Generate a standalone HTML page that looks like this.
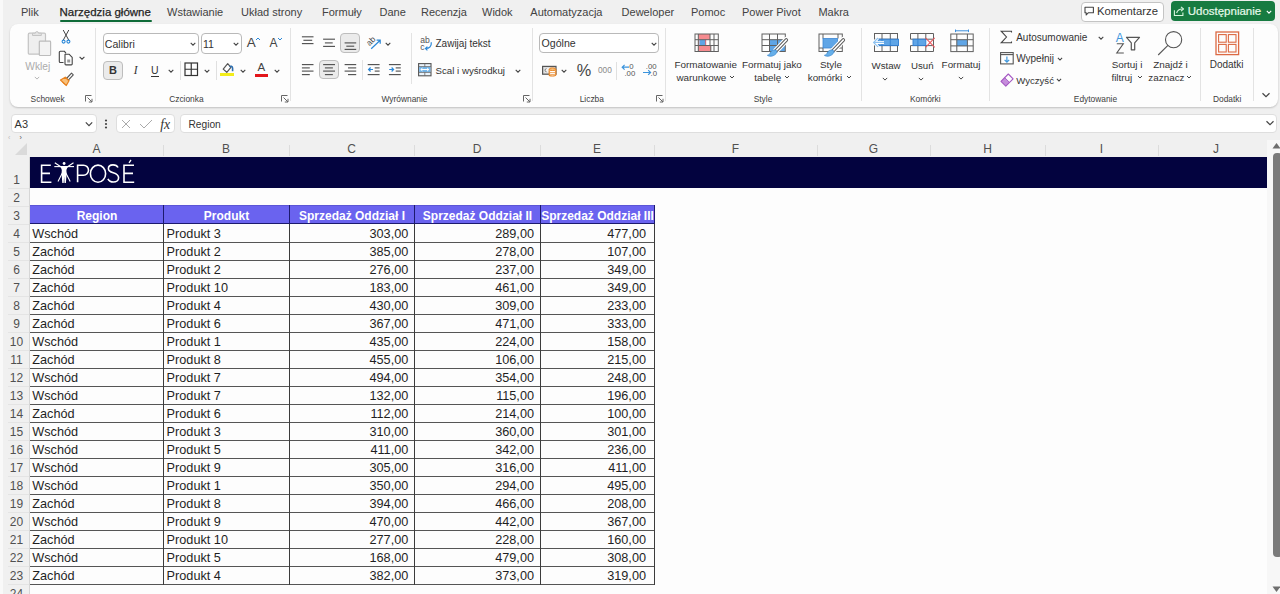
<!DOCTYPE html><html><head><meta charset="utf-8"><style>
html,body{margin:0;padding:0;}
body{width:1280px;height:594px;overflow:hidden;position:relative;background:#f0f0f0;font-family:"Liberation Sans", sans-serif;}
.t{position:absolute;white-space:nowrap;line-height:1;}
svg{overflow:visible}
</style></head><body>
<div style="position:absolute;left:0px;top:0px;width:3px;height:594px;background:#f9f9f9"></div>
<div class="t" style="left:21px;top:6.70px;font-size:11px;color:#424242;">Plik</div>
<div class="t" style="left:59.5px;top:7.46px;font-size:11.5px;color:#242424;-webkit-text-stroke:0.25px #242424;">Narzędzia główne</div>
<div class="t" style="left:167px;top:6.70px;font-size:11px;color:#424242;">Wstawianie</div>
<div class="t" style="left:241px;top:6.70px;font-size:11px;color:#424242;">Układ strony</div>
<div class="t" style="left:322px;top:6.70px;font-size:11px;color:#424242;">Formuły</div>
<div class="t" style="left:379.5px;top:6.70px;font-size:11px;color:#424242;">Dane</div>
<div class="t" style="left:421px;top:6.70px;font-size:11px;color:#424242;">Recenzja</div>
<div class="t" style="left:482px;top:6.70px;font-size:11px;color:#424242;">Widok</div>
<div class="t" style="left:530.3px;top:6.70px;font-size:11px;color:#424242;">Automatyzacja</div>
<div class="t" style="left:621.6px;top:6.70px;font-size:11px;color:#424242;">Deweloper</div>
<div class="t" style="left:691px;top:6.70px;font-size:11px;color:#424242;">Pomoc</div>
<div class="t" style="left:742px;top:6.70px;font-size:11px;color:#424242;">Power Pivot</div>
<div class="t" style="left:818.4px;top:6.70px;font-size:11px;color:#424242;">Makra</div>
<div style="position:absolute;left:59.5px;top:20px;width:92.5px;height:2.2px;background:#0f6b38;border-radius:1px"></div>
<div style="position:absolute;left:1080.5px;top:1.5px;width:83px;height:20px;background:#fff;border:1px solid #c4c4c4;border-radius:4px;box-sizing:border-box"></div>
<svg style="position:absolute;left:1084px;top:6px;" width="12" height="12" viewBox="0 0 12 12"><path d="M1 1.2h8.4v5.6H4.2L2.2 9V6.8H1z" fill="none" stroke="#444" stroke-width="1.1" stroke-linejoin="round"/></svg>
<div class="t" style="left:1097px;top:6.35px;font-size:11.3px;color:#333333;">Komentarze</div>
<div style="position:absolute;left:1171px;top:1px;width:104px;height:20px;background:#177b41;border-radius:4px"></div>
<svg style="position:absolute;left:1170px;top:2px;" width="20" height="20" viewBox="0 0 20 20"><path d="M4.4 8.2V13.5H12.9V10.4" fill="none" stroke="#d8f5de" stroke-width="1.1"/><path d="M6.6 11c0.8-2.6 2.8-4 5.8-4" fill="none" stroke="#d8f5de" stroke-width="1.1"/><path d="M11 4.9l2.5 2.1-2.5 2.2" fill="none" stroke="#d8f5de" stroke-width="1.1" stroke-linejoin="round"/></svg>
<div class="t" style="left:1187.7px;top:6.26px;font-size:11.5px;color:#e6f9ea;-webkit-text-stroke:0.2px #e6f9ea;">Udostępnianie</div>
<svg style="position:absolute;left:1264px;top:8px;" width="10" height="8" viewBox="0 0 10 8"><path d="M2.8 2.9 L5 5.1 L7.2 2.9" fill="none" stroke="#fff" stroke-width="1.1"/></svg>
<div style="position:absolute;left:10px;top:24px;width:1268px;height:83px;background:#fdfdfd;border-radius:8px;box-shadow:0 1px 2px rgba(0,0,0,0.2)"></div>
<div style="position:absolute;left:95px;top:28px;width:1px;height:73px;background:#e3e3e3"></div>
<div style="position:absolute;left:290px;top:28px;width:1px;height:73px;background:#e3e3e3"></div>
<div style="position:absolute;left:532px;top:28px;width:1px;height:73px;background:#e3e3e3"></div>
<div style="position:absolute;left:665px;top:28px;width:1px;height:73px;background:#e3e3e3"></div>
<div style="position:absolute;left:861px;top:28px;width:1px;height:73px;background:#e3e3e3"></div>
<div style="position:absolute;left:989px;top:28px;width:1px;height:73px;background:#e3e3e3"></div>
<div style="position:absolute;left:1200px;top:28px;width:1px;height:73px;background:#e3e3e3"></div>
<div style="position:absolute;left:1252.5px;top:28px;width:1px;height:73px;background:#e3e3e3"></div>
<svg style="position:absolute;left:27px;top:30px;" width="26" height="28" viewBox="0 0 26 28"><rect x="1.3" y="3.2" width="17.2" height="21" rx="1.2" fill="#efefef" stroke="#c4c4c4" stroke-width="1.2"/><path d="M5.5 5.5v-2.3h2.8a1.6 1.6 0 0 1 3.2 0h2.8v2.3z" fill="#e4e4e4" stroke="#c4c4c4" stroke-width="1"/><rect x="12.3" y="11.2" width="11.3" height="14.3" rx="0.8" fill="#f3f3f3" stroke="#bcbcbc" stroke-width="1.2"/></svg>
<div class="t" style="left:25.3px;top:61.58px;font-size:10.2px;color:#ababab;">Wklej</div>
<svg style="position:absolute;left:31.799999999999997px;top:74.3px;" width="10" height="8" viewBox="0 0 10 8"><path d="M2.8 2.9 L5 5.1 L7.2 2.9" fill="none" stroke="#b5b5b5" stroke-width="1"/></svg>
<svg style="position:absolute;left:60px;top:29px;" width="12" height="16" viewBox="0 0 12 16"><path d="M3.2 1l5.5 10M8.8 1l-5.5 10" stroke="#444" stroke-width="1"/><circle cx="3.6" cy="12.6" r="1.5" fill="#fff" stroke="#2b88d8" stroke-width="1.1"/><circle cx="8.4" cy="12.6" r="1.5" fill="#fff" stroke="#2b88d8" stroke-width="1.1"/></svg>
<svg style="position:absolute;left:58px;top:50px;" width="16" height="16" viewBox="0 0 16 16"><path d="M5 1.3H2.3a1 1 0 0 0-1 1v9.2a1 1 0 0 0 1 1H5.5" fill="none" stroke="#444" stroke-width="1.1"/><path d="M5 1.3h1.5l1.5 2" fill="none" stroke="#444" stroke-width="1.1"/><path d="M7 4.2h4l3.2 3.2v6.6a0.9 0.9 0 0 1-0.9 0.9H7.9a0.9 0.9 0 0 1-0.9-0.9z" fill="#fff" stroke="#444" stroke-width="1.1" stroke-linejoin="round"/><rect x="9.2" y="9.5" width="3" height="3" fill="#999"/></svg>
<svg style="position:absolute;left:76.6px;top:54.1px;" width="10" height="8" viewBox="0 0 10 8"><path d="M2.6 2.8 L5 5.2 L7.4 2.8" fill="none" stroke="#444" stroke-width="1.1"/></svg>
<svg style="position:absolute;left:59px;top:71px;" width="16" height="16" viewBox="0 0 16 16"><path d="M7.5 7.5l5-5.3 1.8 1.6-5 5.4" fill="none" stroke="#555" stroke-width="1.1" stroke-linejoin="round"/><path d="M6.2 6.2l3.8 3.6" stroke="#555" stroke-width="1.1"/><path d="M1.5 9l4.7-2.8 3.8 3.6-2.7 4.7z" fill="#f8c07a" stroke="#e8821e" stroke-width="1.2" stroke-linejoin="round"/><path d="M3.5 11.5l3 2" stroke="#e8821e" stroke-width="1"/></svg>
<div class="t" style="left:-52.4px;width:200px;text-align:center;top:94.55px;font-size:8.4px;color:#404040;">Schowek</div>
<svg style="position:absolute;left:85px;top:95px;" width="8" height="8" viewBox="0 0 8 8"><path d="M0.5 6.5V0.5H6.5" fill="none" stroke="#666" stroke-width="1"/><path d="M2.5 2.5L7 7M3.8 7H7V3.8" fill="none" stroke="#666" stroke-width="1"/></svg>
<div style="position:absolute;left:103px;top:33px;width:95.5px;height:20.5px;background:#fff;border:1px solid #b9b9b9;border-radius:4px;box-sizing:border-box"></div>
<div class="t" style="left:104.8px;top:38.59px;font-size:10.6px;color:#333;">Calibri</div>
<svg style="position:absolute;left:188px;top:39.5px;" width="10" height="8" viewBox="0 0 10 8"><path d="M2.7 2.85 L5 5.15 L7.3 2.85" fill="none" stroke="#444" stroke-width="1.1"/></svg>
<div style="position:absolute;left:200.5px;top:33px;width:41px;height:20.5px;background:#fff;border:1px solid #b9b9b9;border-radius:4px;box-sizing:border-box"></div>
<div class="t" style="left:203px;top:38.59px;font-size:10.6px;color:#333;">11</div>
<svg style="position:absolute;left:231px;top:39.5px;" width="10" height="8" viewBox="0 0 10 8"><path d="M2.7 2.85 L5 5.15 L7.3 2.85" fill="none" stroke="#444" stroke-width="1.1"/></svg>
<div class="t" style="left:246.8px;top:35.79px;font-size:13.5px;color:#444;">A</div>
<svg style="position:absolute;left:255px;top:36.5px;" width="6" height="4" viewBox="0 0 6 4"><path d="M1 3l2-2 2 2" fill="none" stroke="#2b88d8" stroke-width="1"/></svg>
<div class="t" style="left:269.5px;top:37.32px;font-size:12px;color:#444;">A</div>
<svg style="position:absolute;left:277px;top:37px;" width="6" height="4" viewBox="0 0 6 4"><path d="M1 1l2 2 2-2" fill="none" stroke="#2b88d8" stroke-width="1"/></svg>
<div style="position:absolute;left:103px;top:60.5px;width:20px;height:19.5px;background:#ebebeb;border:1px solid #bdbdbd;border-radius:4px;box-sizing:border-box"></div>
<div class="t" style="left:13px;width:200px;text-align:center;top:65.20px;font-size:11px;color:#333;font-weight:bold;">B</div>
<div class="t" style="left:133.7px;top:64.96px;font-size:11.5px;color:#333;font-style:italic;font-family:'Liberation Serif',serif;">I</div>
<div class="t" style="left:151px;top:64.94px;font-size:10.5px;color:#333;">U</div>
<div style="position:absolute;left:151px;top:76.3px;width:8px;height:1px;background:#333"></div>
<svg style="position:absolute;left:166px;top:66.5px;" width="10" height="8" viewBox="0 0 10 8"><path d="M2.7 2.85 L5 5.15 L7.3 2.85" fill="none" stroke="#444" stroke-width="1.1"/></svg>
<div style="position:absolute;left:179.5px;top:61px;width:1px;height:19px;background:#e0e0e0"></div>
<svg style="position:absolute;left:184px;top:62px;" width="15" height="15" viewBox="0 0 15 15"><rect x="1" y="1" width="12.5" height="12.5" fill="none" stroke="#333" stroke-width="1.2"/><path d="M7.25 1v12.5M1 7.25h12.5" stroke="#333" stroke-width="1.2"/></svg>
<svg style="position:absolute;left:202px;top:66.5px;" width="10" height="8" viewBox="0 0 10 8"><path d="M2.7 2.85 L5 5.15 L7.3 2.85" fill="none" stroke="#444" stroke-width="1.1"/></svg>
<div style="position:absolute;left:215.8px;top:61px;width:1px;height:19px;background:#e0e0e0"></div>
<svg style="position:absolute;left:218px;top:60px;" width="18" height="16" viewBox="0 0 18 16"><path d="M9.7 3.6L5.2 9.1 8.8 12.3 12.9 7.4z" fill="#fff" stroke="#555" stroke-width="1.2" stroke-linejoin="round"/><path d="M11.6 6.9c1-1 3-0.8 3 1.3v3" fill="none" stroke="#2e6fb0" stroke-width="1.6"/></svg>
<div style="position:absolute;left:220.4px;top:73.4px;width:14px;height:3.1px;background:#f3ed1a"></div>
<svg style="position:absolute;left:238px;top:66.5px;" width="10" height="8" viewBox="0 0 10 8"><path d="M2.7 2.85 L5 5.15 L7.3 2.85" fill="none" stroke="#444" stroke-width="1.1"/></svg>
<div class="t" style="left:257.6px;top:62.26px;font-size:11.5px;color:#444;">A</div>
<div style="position:absolute;left:254.8px;top:73.5px;width:13.4px;height:3.2px;background:#e3161b"></div>
<svg style="position:absolute;left:272px;top:66.5px;" width="10" height="8" viewBox="0 0 10 8"><path d="M2.7 2.85 L5 5.15 L7.3 2.85" fill="none" stroke="#444" stroke-width="1.1"/></svg>
<div class="t" style="left:86.4px;width:200px;text-align:center;top:94.55px;font-size:8.4px;color:#404040;">Czcionka</div>
<svg style="position:absolute;left:281px;top:95px;" width="8" height="8" viewBox="0 0 8 8"><path d="M0.5 6.5V0.5H6.5" fill="none" stroke="#666" stroke-width="1"/><path d="M2.5 2.5L7 7M3.8 7H7V3.8" fill="none" stroke="#666" stroke-width="1"/></svg>
<div style="position:absolute;left:340.2px;top:33px;width:19.8px;height:20.4px;background:#ebebeb;border:1px solid #bdbdbd;border-radius:4px;box-sizing:border-box"></div>
<div style="position:absolute;left:319.2px;top:60.2px;width:19.7px;height:19.2px;background:#ebebeb;border:1px solid #bdbdbd;border-radius:4px;box-sizing:border-box"></div>
<svg style="position:absolute;left:296px;top:30px;" width="110" height="52" viewBox="0 0 110 52"><path d="M5.9 6.8H17.5" stroke="#555" stroke-width="1.15"/><path d="M7.4 10.3H16.2" stroke="#555" stroke-width="1.15"/><path d="M5.9 13.6H17.5" stroke="#555" stroke-width="1.15"/><path d="M27.1 9.2H39" stroke="#555" stroke-width="1.15"/><path d="M28.9 12.9H36.7" stroke="#555" stroke-width="1.15"/><path d="M27.1 16.4H39" stroke="#555" stroke-width="1.15"/><path d="M48.6 12.9H60.2" stroke="#555" stroke-width="1.15"/><path d="M50.3 16.2H58.2" stroke="#555" stroke-width="1.15"/><path d="M48.6 19.4H60.2" stroke="#555" stroke-width="1.15"/><path d="M5.9 34.6H17.5" stroke="#555" stroke-width="1.15"/><path d="M5.9 37.9H13.8" stroke="#555" stroke-width="1.15"/><path d="M5.9 41.1H17.5" stroke="#555" stroke-width="1.15"/><path d="M5.9 44.6H13.8" stroke="#555" stroke-width="1.15"/><path d="M27.1 34.6H39" stroke="#555" stroke-width="1.15"/><path d="M28.9 37.9H36.9" stroke="#555" stroke-width="1.15"/><path d="M27.1 41.1H39" stroke="#555" stroke-width="1.15"/><path d="M28.9 44.6H36.9" stroke="#555" stroke-width="1.15"/><path d="M48.6 34.6H60.2" stroke="#555" stroke-width="1.15"/><path d="M52 37.9H60.2" stroke="#555" stroke-width="1.15"/><path d="M48.6 41.1H60.2" stroke="#555" stroke-width="1.15"/><path d="M52 44.6H60.2" stroke="#555" stroke-width="1.15"/><path d="M71.7 34.6H83.6" stroke="#555" stroke-width="1.15"/><path d="M78.7 37.9H83.6" stroke="#555" stroke-width="1.15"/><path d="M78.7 41.1H83.6" stroke="#555" stroke-width="1.15"/><path d="M71.7 44.6H83.6" stroke="#555" stroke-width="1.15"/><path d="M92.9 34.6H104.8" stroke="#555" stroke-width="1.15"/><path d="M99.7 37.9H104.8" stroke="#555" stroke-width="1.15"/><path d="M99.7 41.1H104.8" stroke="#555" stroke-width="1.15"/><path d="M92.9 44.6H104.8" stroke="#555" stroke-width="1.15"/><path d="M77 39.5H72.5M74.6 37.5l-2 2 2 2" fill="none" stroke="#2b88d8" stroke-width="1.2"/><path d="M93.2 39.5H97.7M95.6 37.5l2 2-2 2" fill="none" stroke="#2b88d8" stroke-width="1.2"/><text x="0" y="0" font-size="8.2" font-family="Liberation Sans" fill="#444" transform="translate(73.5 16.3) rotate(-45)">ab</text><path d="M75.2 18.8L84.2 10.2M80.6 10.2h3.6v3.6" fill="none" stroke="#2b88d8" stroke-width="1.2"/><path d="M66.5 30v20" stroke="#e3e3e3" stroke-width="1"/></svg>
<svg style="position:absolute;left:382.9px;top:39.6px;" width="10" height="8" viewBox="0 0 10 8"><path d="M2.7 2.85 L5 5.15 L7.3 2.85" fill="none" stroke="#444" stroke-width="1.1"/></svg>
<div style="position:absolute;left:410.5px;top:33px;width:1px;height:51px;background:#e3e3e3"></div>
<svg style="position:absolute;left:414px;top:32px;" width="20" height="20" viewBox="0 0 20 20"><text x="6.2" y="11.2" font-size="8.6" font-family="Liberation Sans" fill="#555">ab</text><text x="6.2" y="17.6" font-size="8.6" font-family="Liberation Sans" fill="#555">c</text><path d="M17.3 10.2c0.3 4-1.8 6.3-5.6 6.3M13.4 14.6l-1.9 1.9 1.9 1.9" fill="none" stroke="#2b88d8" stroke-width="1.2"/></svg>
<div class="t" style="left:435.5px;top:39.18px;font-size:10px;color:#333;">Zawijaj tekst</div>
<svg style="position:absolute;left:418px;top:63px;" width="14" height="14" viewBox="0 0 14 14"><rect x="0.6" y="0.6" width="12.4" height="12.2" fill="#eaf4fc" stroke="#555" stroke-width="1.1"/><rect x="1.2" y="3.8" width="11.2" height="5.4" fill="#74b6ea"/><path d="M0.6 3.6h12.4M0.6 9.4h12.4M6.8 0.6v3M6.8 9.4v3.4" stroke="#666" stroke-width="0.8"/><path d="M2.8 6.5h8M4.5 5l-1.7 1.5 1.7 1.5M9.1 5l1.7 1.5-1.7 1.5" fill="none" stroke="#fff" stroke-width="1"/></svg>
<div class="t" style="left:435.5px;top:65.82px;font-size:9.7px;color:#333;">Scal i wyśrodkuj</div>
<svg style="position:absolute;left:512.5px;top:66.5px;" width="10" height="8" viewBox="0 0 10 8"><path d="M2.7 2.85 L5 5.15 L7.3 2.85" fill="none" stroke="#444" stroke-width="1.1"/></svg>
<div class="t" style="left:304.5px;width:200px;text-align:center;top:94.55px;font-size:8.4px;color:#404040;">Wyrównanie</div>
<svg style="position:absolute;left:522.5px;top:95px;" width="8" height="8" viewBox="0 0 8 8"><path d="M0.5 6.5V0.5H6.5" fill="none" stroke="#666" stroke-width="1"/><path d="M2.5 2.5L7 7M3.8 7H7V3.8" fill="none" stroke="#666" stroke-width="1"/></svg>
<div style="position:absolute;left:539.3px;top:33.3px;width:120.2px;height:20px;background:#fff;border:1px solid #b9b9b9;border-radius:4px;box-sizing:border-box"></div>
<div class="t" style="left:541.5px;top:38.49px;font-size:10.6px;color:#333;">Ogólne</div>
<svg style="position:absolute;left:649px;top:39.5px;" width="10" height="8" viewBox="0 0 10 8"><path d="M2.7 2.85 L5 5.15 L7.3 2.85" fill="none" stroke="#444" stroke-width="1.1"/></svg>
<svg style="position:absolute;left:542px;top:65px;" width="16" height="13" viewBox="0 0 16 13"><rect x="0.6" y="1.4" width="13.4" height="7.8" fill="#dcdcdc" stroke="#555" stroke-width="1.2"/><rect x="2.6" y="3.2" width="9.4" height="4.2" fill="#f4f4f4"/><path d="M4.6 3.6a1.6 1.6 0 1 0 0 3.2" fill="none" stroke="#666" stroke-width="0.8"/><path d="M7.2 4.2v5.8c0 1.3 6.6 1.3 6.6 0v-5.8" fill="#fff" stroke="#e8821e" stroke-width="1.1"/><ellipse cx="10.5" cy="4.2" rx="3.3" ry="1.3" fill="#f8c07a" stroke="#e8821e" stroke-width="1"/><path d="M7.2 6.7c0 1.2 6.6 1.2 6.6 0M7.2 8.6c0 1.2 6.6 1.2 6.6 0" fill="none" stroke="#e8821e" stroke-width="0.8"/></svg>
<svg style="position:absolute;left:559.3px;top:66.5px;" width="10" height="8" viewBox="0 0 10 8"><path d="M2.7 2.85 L5 5.15 L7.3 2.85" fill="none" stroke="#444" stroke-width="1.1"/></svg>
<div class="t" style="left:576.8px;top:62.04px;font-size:16.3px;color:#444;">%</div>
<div class="t" style="left:598px;top:66.00px;font-size:8.3px;color:#8a8a8a;">000</div>
<div style="position:absolute;left:616.3px;top:62px;width:1px;height:18px;background:#e0e0e0"></div>
<svg style="position:absolute;left:621px;top:62px;" width="16" height="16" viewBox="0 0 16 16"><text x="8.2" y="7.2" font-size="7.8" font-family="Liberation Sans" fill="#555">0</text><text x="3.4" y="14" font-size="7.8" font-family="Liberation Sans" fill="#555">.00</text><path d="M8 5.2H1.2M3.6 2.8l-2.4 2.4 2.4 2.4" fill="none" stroke="#3b94dc" stroke-width="1.2"/></svg>
<svg style="position:absolute;left:642px;top:62px;" width="16" height="16" viewBox="0 0 16 16"><text x="3.8" y="7.2" font-size="7.8" font-family="Liberation Sans" fill="#555">.00</text><text x="8.6" y="14" font-size="7.8" font-family="Liberation Sans" fill="#555">.0</text><path d="M1 10.5h7.5M6.2 8.1l2.4 2.4-2.4 2.4" fill="none" stroke="#3b94dc" stroke-width="1.2"/></svg>
<div class="t" style="left:491.79999999999995px;width:200px;text-align:center;top:94.55px;font-size:8.4px;color:#404040;">Liczba</div>
<svg style="position:absolute;left:656px;top:95px;" width="8" height="8" viewBox="0 0 8 8"><path d="M0.5 6.5V0.5H6.5" fill="none" stroke="#666" stroke-width="1"/><path d="M2.5 2.5L7 7M3.8 7H7V3.8" fill="none" stroke="#666" stroke-width="1"/></svg>
<svg style="position:absolute;left:693.5px;top:32.5px;" width="26" height="21" viewBox="0 0 26 21"><rect x="4.3" y="1" width="11.7" height="5.7" fill="#f58b8f"/><rect x="4.3" y="12.5" width="12.5" height="6" fill="#f58b8f"/><rect x="4.3" y="6.7" width="1.2" height="5.8" fill="#f58b8f"/><rect x="5.5" y="6.7" width="6.2" height="5.8" fill="#5fa5e6"/><path d="M11.7 6.7v5.8" stroke="#e0474d" stroke-width="0.8"/><g fill="none" stroke="#606060" stroke-width="1"><rect x="1" y="1" width="23.3" height="17.5"/><path d="M4.3 1v17.5M16 1v5.7M16.8 12.5v6M16 6.7v5.8M20 1v17.5M1 6.7h23.3M1 12.5h23.3"/></g></svg>
<div class="t" style="left:674.4px;top:59.73px;font-size:9.9px;color:#333;">Formatowanie</div>
<div class="t" style="left:676.4px;top:73.03px;font-size:9.9px;color:#333;">warunkowe</div>
<svg style="position:absolute;left:726.8px;top:73.2px;" width="10" height="8" viewBox="0 0 10 8"><path d="M3.0 3.0 L5 5.0 L7.0 3.0" fill="none" stroke="#444" stroke-width="1"/></svg>
<svg style="position:absolute;left:760.5px;top:32.5px;" width="28" height="26" viewBox="0 0 28 26"><rect x="8.5" y="6.7" width="15.5" height="11.8" fill="#5fa5e6"/><g fill="none" stroke="#606060" stroke-width="1"><rect x="1" y="1" width="23.3" height="17.5"/><path d="M8.5 1v17.5M16.5 1v17.5M1 6.7h23.3M1 12.5h23.3"/></g><path d="M14.8 18L25.3 7" stroke="#fdfdfd" stroke-width="6" stroke-linecap="round"/><path d="M14.8 18L25.3 7" stroke="#5a5a5a" stroke-width="3.6" stroke-linecap="round"/><path d="M14.8 18L25.3 7" stroke="#fff" stroke-width="1.7" stroke-linecap="round"/><path d="M15.2 17.2C12.5 16.4 9.8 17.8 9 20.3 8.6 21.5 7.6 22.2 6.4 22.3 9 24.2 13.8 23.2 16 19.3z" fill="#66afe9" stroke="#3f8bd2" stroke-width="0.8" stroke-linejoin="round"/></svg>
<div class="t" style="left:742px;top:59.73px;font-size:9.9px;color:#333;">Formatuj jako</div>
<div class="t" style="left:754.3px;top:73.03px;font-size:9.9px;color:#333;">tabelę</div>
<svg style="position:absolute;left:782px;top:73.2px;" width="10" height="8" viewBox="0 0 10 8"><path d="M3.0 3.0 L5 5.0 L7.0 3.0" fill="none" stroke="#444" stroke-width="1"/></svg>
<svg style="position:absolute;left:817.5px;top:32.5px;" width="28" height="26" viewBox="0 0 28 26"><rect x="5" y="5.5" width="14.5" height="9.5" fill="#5fa5e6"/><g fill="none" stroke="#606060" stroke-width="1"><rect x="1" y="1" width="23.3" height="17.5"/><path d="M5 1v4.5M5 15v3.5M20 1v4.5M1 15h4M20 15h4.3"/></g><rect x="5" y="5.5" width="14.5" height="9.5" fill="none" stroke="#3d86d1" stroke-width="0.8"/><path d="M14.8 18L25.3 7" stroke="#fdfdfd" stroke-width="6" stroke-linecap="round"/><path d="M14.8 18L25.3 7" stroke="#5a5a5a" stroke-width="3.6" stroke-linecap="round"/><path d="M14.8 18L25.3 7" stroke="#fff" stroke-width="1.7" stroke-linecap="round"/><path d="M15.2 17.2C12.5 16.4 9.8 17.8 9 20.3 8.6 21.5 7.6 22.2 6.4 22.3 9 24.2 13.8 23.2 16 19.3z" fill="#66afe9" stroke="#3f8bd2" stroke-width="0.8" stroke-linejoin="round"/></svg>
<div class="t" style="left:820px;top:59.73px;font-size:9.9px;color:#333;">Style</div>
<div class="t" style="left:807.7px;top:73.03px;font-size:9.9px;color:#333;">komórki</div>
<svg style="position:absolute;left:843.8px;top:73.2px;" width="10" height="8" viewBox="0 0 10 8"><path d="M3.0 3.0 L5 5.0 L7.0 3.0" fill="none" stroke="#444" stroke-width="1"/></svg>
<div class="t" style="left:663px;width:200px;text-align:center;top:94.55px;font-size:8.4px;color:#404040;">Style</div>
<svg style="position:absolute;left:871.5px;top:33px;" width="30" height="20" viewBox="0 0 30 20"><g fill="none" stroke="#606060" stroke-width="1"><rect x="2.5" y="0.5" width="23" height="18"/><path d="M10 0.5v18M18.3 0.5v18M2.5 6.2h23M2.5 12.6h23"/></g><rect x="6" y="6.2" width="20.5" height="6.4" fill="#5fa5e6" stroke="#2f7dd1" stroke-width="0.9"/><path d="M10 6.2v6.4M18.3 6.2v6.4" stroke="#2f7dd1" stroke-width="0.8"/><path d="M12 9.4H2M6 5l-4.4 4.4 4.4 4.4" fill="none" stroke="#fff" stroke-width="3"/><path d="M12 9.4H2M6 5l-4.4 4.4 4.4 4.4" fill="none" stroke="#8ec2f0" stroke-width="1.2"/></svg>
<div class="t" style="left:871.5px;top:61.12px;font-size:9.7px;color:#333;">Wstaw</div>
<svg style="position:absolute;left:880px;top:74.5px;" width="10" height="8" viewBox="0 0 10 8"><path d="M2.8 2.9 L5 5.1 L7.2 2.9" fill="none" stroke="#444" stroke-width="1"/></svg>
<svg style="position:absolute;left:909.5px;top:33px;" width="28" height="20" viewBox="0 0 28 20"><g fill="none" stroke="#606060" stroke-width="1"><path d="M0.5 6.2V0.5h23v18h-23v-5.9M7.9 0.5v5.7M15.8 0.5v5.7M7.9 12.6v5.9M15.8 12.6v5.9M0.5 6.2h23M0.5 12.6h23"/></g><rect x="3" y="6.2" width="12.8" height="6.4" fill="#5fa5e6" stroke="#2f7dd1" stroke-width="0.9"/><path d="M7.9 6.2v6.4" stroke="#2f7dd1" stroke-width="0.8"/><path d="M15.5 4.8l9.2 9.6M24.7 4.8l-9.2 9.6" stroke="#ea5a60" stroke-width="1.1"/></svg>
<div class="t" style="left:911px;top:61.12px;font-size:9.7px;color:#333;">Usuń</div>
<svg style="position:absolute;left:916.3px;top:74.5px;" width="10" height="8" viewBox="0 0 10 8"><path d="M2.8 2.9 L5 5.1 L7.2 2.9" fill="none" stroke="#444" stroke-width="1"/></svg>
<svg style="position:absolute;left:949.5px;top:28.5px;" width="26" height="25" viewBox="0 0 26 25"><path d="M5.5 1.8h13M5.5 0.5v2.6M18.5 0.5v2.6" stroke="#3d8fdc" stroke-width="1"/><rect x="6.8" y="10.7" width="10.8" height="6.4" fill="#5fa5e6"/><g fill="none" stroke="#606060" stroke-width="1"><rect x="0.8" y="5" width="22.4" height="17.6"/><path d="M6.8 5v17.6M17.4 5v17.6M0.8 10.7h22.4M0.8 16.9h22.4"/></g></svg>
<div class="t" style="left:941.6px;top:59.63px;font-size:9.9px;color:#333;">Formatuj</div>
<svg style="position:absolute;left:956.2px;top:73.5px;" width="10" height="8" viewBox="0 0 10 8"><path d="M2.8 2.9 L5 5.1 L7.2 2.9" fill="none" stroke="#444" stroke-width="1"/></svg>
<div class="t" style="left:825.3px;width:200px;text-align:center;top:94.55px;font-size:8.4px;color:#404040;">Komórki</div>
<svg style="position:absolute;left:1000px;top:30px;" width="13" height="14" viewBox="0 0 13 14"><path d="M11.5 2.5V1.2H1.2l5.3 5.8-5.3 5.8h10.3v-1.3" fill="none" stroke="#444" stroke-width="1.1" stroke-linejoin="miter"/></svg>
<div class="t" style="left:1016.2px;top:33.48px;font-size:10px;color:#333;">Autosumowanie</div>
<svg style="position:absolute;left:1096.2px;top:33.5px;" width="10" height="8" viewBox="0 0 10 8"><path d="M2.7 2.85 L5 5.15 L7.3 2.85" fill="none" stroke="#444" stroke-width="1.1"/></svg>
<svg style="position:absolute;left:999.5px;top:52px;" width="14" height="13" viewBox="0 0 14 13"><rect x="0.6" y="0.6" width="12.6" height="11.3" fill="#fff" stroke="#555" stroke-width="1.1"/><path d="M0.6 2.6h12.6" stroke="#555" stroke-width="1.1"/><path d="M6.9 4.6v5.6M4.6 7.9l2.3 2.3 2.3-2.3" fill="none" stroke="#3d97dd" stroke-width="1.2"/></svg>
<div class="t" style="left:1016.2px;top:53.78px;font-size:10px;color:#333;">Wypełnij</div>
<svg style="position:absolute;left:1054.5px;top:54.5px;" width="10" height="8" viewBox="0 0 10 8"><path d="M2.9 2.95 L5 5.05 L7.1 2.95" fill="none" stroke="#444" stroke-width="1.1"/></svg>
<svg style="position:absolute;left:999.5px;top:72.5px;" width="14" height="14" viewBox="0 0 14 14"><path d="M1 8.3l3.7-3.7 4.8 4.8-3.7 3.7z" fill="#c68ddc"/><path d="M1 8.3l7.3-7.3 4.8 4.8-7.3 7.3z" fill="none" stroke="#a457c2" stroke-width="1.1" stroke-linejoin="round"/><path d="M4.7 4.6l4.8 4.8" stroke="#a457c2" stroke-width="0.9"/></svg>
<div class="t" style="left:1016.2px;top:75.67px;font-size:9.6px;color:#333;">Wyczyść</div>
<svg style="position:absolute;left:1053.5px;top:75.5px;" width="10" height="8" viewBox="0 0 10 8"><path d="M2.9 2.95 L5 5.05 L7.1 2.95" fill="none" stroke="#444" stroke-width="1.1"/></svg>
<svg style="position:absolute;left:1115px;top:31px;" width="26" height="25" viewBox="0 0 26 25"><text x="0.8" y="10.5" font-size="12" font-family="Liberation Sans" fill="#3d97dd">A</text><path d="M1.8 12.8h6.5l-6.5 9.2h7" fill="none" stroke="#555" stroke-width="1.1"/><path d="M11.5 6.3h13l-4.8 5.5v7h-3.4v-7z" fill="none" stroke="#555" stroke-width="1.2" stroke-linejoin="round"/></svg>
<div class="t" style="left:1111.7px;top:59.63px;font-size:9.9px;color:#333;">Sortuj i</div>
<div class="t" style="left:1111.4px;top:73.03px;font-size:9.9px;color:#333;">filtruj</div>
<svg style="position:absolute;left:1134.6px;top:73.2px;" width="10" height="8" viewBox="0 0 10 8"><path d="M3.0 3.0 L5 5.0 L7.0 3.0" fill="none" stroke="#444" stroke-width="1"/></svg>
<svg style="position:absolute;left:1157px;top:30px;" width="28" height="27" viewBox="0 0 28 27"><circle cx="16.6" cy="9.7" r="8.1" fill="none" stroke="#555" stroke-width="1.1"/><path d="M10.9 15.4L1.2 25" stroke="#555" stroke-width="1.1"/></svg>
<div class="t" style="left:1153.2px;top:59.63px;font-size:9.9px;color:#333;">Znajdź i</div>
<div class="t" style="left:1148.3px;top:73.03px;font-size:9.9px;color:#333;">zaznacz</div>
<svg style="position:absolute;left:1183.5px;top:73.2px;" width="10" height="8" viewBox="0 0 10 8"><path d="M3.0 3.0 L5 5.0 L7.0 3.0" fill="none" stroke="#444" stroke-width="1"/></svg>
<div class="t" style="left:995.5px;width:200px;text-align:center;top:94.55px;font-size:8.4px;color:#404040;">Edytowanie</div>
<svg style="position:absolute;left:1215px;top:30.5px;" width="25" height="25" viewBox="0 0 25 25"><rect x="1" y="1" width="22.6" height="22.6" fill="none" stroke="#dc6a44" stroke-width="1.3"/><rect x="3.6" y="3.6" width="7.6" height="7.6" fill="none" stroke="#dc6a44" stroke-width="1.1"/><rect x="13.4" y="3.6" width="7.6" height="7.6" fill="none" stroke="#dc6a44" stroke-width="1.1"/><rect x="3.6" y="13.4" width="7.6" height="7.6" fill="none" stroke="#dc6a44" stroke-width="1.1"/><rect x="13.4" y="13.4" width="7.6" height="7.6" fill="none" stroke="#dc6a44" stroke-width="1.1"/></svg>
<div class="t" style="left:1209.7px;top:59.58px;font-size:10px;color:#333;">Dodatki</div>
<div class="t" style="left:1127.2px;width:200px;text-align:center;top:94.55px;font-size:8.4px;color:#404040;">Dodatki</div>
<svg style="position:absolute;left:1260.8px;top:91.2px;" width="10" height="8" viewBox="0 0 10 8"><path d="M1.5 2.25 L5 5.75 L8.5 2.25" fill="none" stroke="#444" stroke-width="1.2"/></svg>
<div style="position:absolute;left:10.6px;top:113.5px;width:86.5px;height:19.5px;background:#fff;border-radius:4px;border:1px solid #dedede;box-sizing:border-box"></div>
<div class="t" style="left:14.6px;top:119.00px;font-size:11px;color:#333;">A3</div>
<svg style="position:absolute;left:84px;top:120px;" width="10" height="8" viewBox="0 0 10 8"><path d="M1.7999999999999998 2.4 L5 5.6 L8.2 2.4" fill="none" stroke="#444" stroke-width="1.2"/></svg>
<svg style="position:absolute;left:104px;top:119px;" width="4" height="10" viewBox="0 0 4 10"><circle cx="2" cy="1.5" r="1.1" fill="#444"/><circle cx="2" cy="5" r="1.1" fill="#444"/><circle cx="2" cy="8.5" r="1.1" fill="#444"/></svg>
<div style="position:absolute;left:115.8px;top:113.5px;width:59.5px;height:19.5px;background:#fff;border-radius:4px;border:1px solid #dedede;box-sizing:border-box"></div>
<svg style="position:absolute;left:120.5px;top:119px;" width="10" height="10" viewBox="0 0 10 10"><path d="M1 1l8 8M9 1l-8 8" stroke="#aaa" stroke-width="1"/></svg>
<svg style="position:absolute;left:139px;top:119px;" width="14" height="10" viewBox="0 0 14 10"><path d="M1 5l4 4 8-8" fill="none" stroke="#aaa" stroke-width="1"/></svg>
<div class="t" style="left:160.2px;top:117.55px;font-size:13.8px;color:#333;font-style:italic;font-family:'Liberation Serif',serif;">fx</div>
<div style="position:absolute;left:180px;top:113.5px;width:1097px;height:19.5px;background:#fff;border-radius:4px;border:1px solid #dedede;box-sizing:border-box"></div>
<div class="t" style="left:188.5px;top:119.58px;font-size:10.2px;color:#333;">Region</div>
<svg style="position:absolute;left:1265px;top:119px;" width="10" height="8" viewBox="0 0 10 8"><path d="M1.5 2.25 L5 5.75 L8.5 2.25" fill="none" stroke="#444" stroke-width="1.2"/></svg>
<div class="t" style="left:8px;top:134.13px;font-size:7px;color:#bbb;">‹</div>
<div class="t" style="left:19.5px;top:134.13px;font-size:7px;color:#555;">›</div>
<div style="position:absolute;left:3px;top:140px;width:1264px;height:17px;background:#f0f0f0"></div>
<svg style="position:absolute;left:14px;top:142px;" width="14" height="14" viewBox="0 0 14 14"><path d="M13 1V13H1z" fill="#dadada"/></svg>
<div class="t" style="left:-3.5px;width:200px;text-align:center;top:142.52px;font-size:12px;color:#505050;">A</div>
<div class="t" style="left:126.0px;width:200px;text-align:center;top:142.52px;font-size:12px;color:#505050;">B</div>
<div style="position:absolute;left:163px;top:145px;width:1px;height:11px;background:#dcdcdc"></div>
<div class="t" style="left:251.5px;width:200px;text-align:center;top:142.52px;font-size:12px;color:#505050;">C</div>
<div style="position:absolute;left:289px;top:145px;width:1px;height:11px;background:#dcdcdc"></div>
<div class="t" style="left:377.0px;width:200px;text-align:center;top:142.52px;font-size:12px;color:#505050;">D</div>
<div style="position:absolute;left:414px;top:145px;width:1px;height:11px;background:#dcdcdc"></div>
<div class="t" style="left:497.0px;width:200px;text-align:center;top:142.52px;font-size:12px;color:#505050;">E</div>
<div style="position:absolute;left:540px;top:145px;width:1px;height:11px;background:#dcdcdc"></div>
<div class="t" style="left:635.5px;width:200px;text-align:center;top:142.52px;font-size:12px;color:#505050;">F</div>
<div style="position:absolute;left:654px;top:145px;width:1px;height:11px;background:#dcdcdc"></div>
<div class="t" style="left:773.5px;width:200px;text-align:center;top:142.52px;font-size:12px;color:#505050;">G</div>
<div style="position:absolute;left:817px;top:145px;width:1px;height:11px;background:#dcdcdc"></div>
<div class="t" style="left:887.5px;width:200px;text-align:center;top:142.52px;font-size:12px;color:#505050;">H</div>
<div style="position:absolute;left:930px;top:145px;width:1px;height:11px;background:#dcdcdc"></div>
<div class="t" style="left:1001.5px;width:200px;text-align:center;top:142.52px;font-size:12px;color:#505050;">I</div>
<div style="position:absolute;left:1045px;top:145px;width:1px;height:11px;background:#dcdcdc"></div>
<div class="t" style="left:1116.0px;width:200px;text-align:center;top:142.52px;font-size:12px;color:#505050;">J</div>
<div style="position:absolute;left:1158px;top:145px;width:1px;height:11px;background:#dcdcdc"></div>
<div style="position:absolute;left:30px;top:157px;width:1237px;height:437px;background:#fdfdfd"></div>
<div class="t" style="left:-83.5px;width:200px;text-align:center;top:173.92px;font-size:12px;color:#505050;">1</div>
<div class="t" style="left:-83.5px;width:200px;text-align:center;top:192.22px;font-size:12px;color:#505050;">2</div>
<div style="position:absolute;left:8px;top:188px;width:21px;height:1px;background:#e4e4e4"></div>
<div class="t" style="left:-83.5px;width:200px;text-align:center;top:210.22px;font-size:12px;color:#505050;">3</div>
<div style="position:absolute;left:8px;top:206px;width:21px;height:1px;background:#e4e4e4"></div>
<div class="t" style="left:-83.5px;width:200px;text-align:center;top:228.22px;font-size:12px;color:#505050;">4</div>
<div style="position:absolute;left:8px;top:224px;width:21px;height:1px;background:#e4e4e4"></div>
<div class="t" style="left:-83.5px;width:200px;text-align:center;top:246.22px;font-size:12px;color:#505050;">5</div>
<div style="position:absolute;left:8px;top:242px;width:21px;height:1px;background:#e4e4e4"></div>
<div class="t" style="left:-83.5px;width:200px;text-align:center;top:264.22px;font-size:12px;color:#505050;">6</div>
<div style="position:absolute;left:8px;top:260px;width:21px;height:1px;background:#e4e4e4"></div>
<div class="t" style="left:-83.5px;width:200px;text-align:center;top:282.22px;font-size:12px;color:#505050;">7</div>
<div style="position:absolute;left:8px;top:278px;width:21px;height:1px;background:#e4e4e4"></div>
<div class="t" style="left:-83.5px;width:200px;text-align:center;top:300.22px;font-size:12px;color:#505050;">8</div>
<div style="position:absolute;left:8px;top:296px;width:21px;height:1px;background:#e4e4e4"></div>
<div class="t" style="left:-83.5px;width:200px;text-align:center;top:318.22px;font-size:12px;color:#505050;">9</div>
<div style="position:absolute;left:8px;top:314px;width:21px;height:1px;background:#e4e4e4"></div>
<div class="t" style="left:-83.5px;width:200px;text-align:center;top:336.22px;font-size:12px;color:#505050;">10</div>
<div style="position:absolute;left:8px;top:332px;width:21px;height:1px;background:#e4e4e4"></div>
<div class="t" style="left:-83.5px;width:200px;text-align:center;top:354.22px;font-size:12px;color:#505050;">11</div>
<div style="position:absolute;left:8px;top:350px;width:21px;height:1px;background:#e4e4e4"></div>
<div class="t" style="left:-83.5px;width:200px;text-align:center;top:372.22px;font-size:12px;color:#505050;">12</div>
<div style="position:absolute;left:8px;top:368px;width:21px;height:1px;background:#e4e4e4"></div>
<div class="t" style="left:-83.5px;width:200px;text-align:center;top:390.22px;font-size:12px;color:#505050;">13</div>
<div style="position:absolute;left:8px;top:386px;width:21px;height:1px;background:#e4e4e4"></div>
<div class="t" style="left:-83.5px;width:200px;text-align:center;top:408.22px;font-size:12px;color:#505050;">14</div>
<div style="position:absolute;left:8px;top:404px;width:21px;height:1px;background:#e4e4e4"></div>
<div class="t" style="left:-83.5px;width:200px;text-align:center;top:426.22px;font-size:12px;color:#505050;">15</div>
<div style="position:absolute;left:8px;top:422px;width:21px;height:1px;background:#e4e4e4"></div>
<div class="t" style="left:-83.5px;width:200px;text-align:center;top:444.22px;font-size:12px;color:#505050;">16</div>
<div style="position:absolute;left:8px;top:440px;width:21px;height:1px;background:#e4e4e4"></div>
<div class="t" style="left:-83.5px;width:200px;text-align:center;top:462.22px;font-size:12px;color:#505050;">17</div>
<div style="position:absolute;left:8px;top:458px;width:21px;height:1px;background:#e4e4e4"></div>
<div class="t" style="left:-83.5px;width:200px;text-align:center;top:480.22px;font-size:12px;color:#505050;">18</div>
<div style="position:absolute;left:8px;top:476px;width:21px;height:1px;background:#e4e4e4"></div>
<div class="t" style="left:-83.5px;width:200px;text-align:center;top:498.22px;font-size:12px;color:#505050;">19</div>
<div style="position:absolute;left:8px;top:494px;width:21px;height:1px;background:#e4e4e4"></div>
<div class="t" style="left:-83.5px;width:200px;text-align:center;top:516.22px;font-size:12px;color:#505050;">20</div>
<div style="position:absolute;left:8px;top:512px;width:21px;height:1px;background:#e4e4e4"></div>
<div class="t" style="left:-83.5px;width:200px;text-align:center;top:534.22px;font-size:12px;color:#505050;">21</div>
<div style="position:absolute;left:8px;top:530px;width:21px;height:1px;background:#e4e4e4"></div>
<div class="t" style="left:-83.5px;width:200px;text-align:center;top:552.22px;font-size:12px;color:#505050;">22</div>
<div style="position:absolute;left:8px;top:548px;width:21px;height:1px;background:#e4e4e4"></div>
<div class="t" style="left:-83.5px;width:200px;text-align:center;top:570.22px;font-size:12px;color:#505050;">23</div>
<div style="position:absolute;left:8px;top:566px;width:21px;height:1px;background:#e4e4e4"></div>
<div class="t" style="left:-83.5px;width:200px;text-align:center;top:588.22px;font-size:12px;color:#505050;">24</div>
<div style="position:absolute;left:8px;top:584px;width:21px;height:1px;background:#e4e4e4"></div>
<div style="position:absolute;left:30px;top:157px;width:1237px;height:30.5px;background:#03033f"></div>
<svg style="position:absolute;left:38px;top:158px;" width="100" height="28" viewBox="0 0 100 28"><g fill="none" stroke="#fff" stroke-width="1.6">
<path d="M12.8 7.2H3.6V24.2H13.4M3.6 15.4H12"/>
<path d="M39.6 24.2V7.2H45.5a5 5 0 0 1 0 10H39.6"/>
<ellipse cx="60" cy="15.7" rx="7.6" ry="8.6"/>
<path d="M80 9.5c-1-2-3-2.6-5-2.6-2.5 0-4.6 1.4-4.6 3.8 0 5.2 10.2 3 10.2 9 0 2.6-2.3 4.3-5.2 4.3-2.5 0-4.5-1.2-5.5-3.2"/>
<path d="M96 7.2H86V24.2H96.2M86 15.4H95"/>
<path d="M91 4.8L93 2" stroke-width="1.3"/>
</g>
<g fill="#fff">
<circle cx="26.1" cy="5.5" r="1.4"/>
<path d="M22.3 8 L30 8 L28.4 12 L28.6 16 L27.9 25 L26.5 25 L26.1 18.5 L25.7 25 L24.3 25 L23.6 16 L23.8 12 Z"/>
</g>
<g stroke="#fff" stroke-width="1.1" fill="none">
<path d="M23.5 9.2 L16.8 4.8 M28.8 9.2 L35.5 4.8"/>
<path d="M16.3 8.6 H36"/>
<path d="M24.6 14.5 L20 23.5 M27.6 14.5 L32.2 23.5"/>
</g></svg>
<div style="position:absolute;left:30px;top:205px;width:624px;height:18px;background:#6a63ef"></div>
<div style="position:absolute;left:30px;top:205px;width:624px;height:1px;background:#5b55d6"></div>
<div style="position:absolute;left:30px;top:223px;width:625px;height:1px;background:#1c1a6e"></div>
<div class="t" style="left:-3.0px;width:200px;text-align:center;top:209.62px;font-size:12px;color:#ffffff;font-weight:bold;">Region</div>
<div class="t" style="left:126.5px;width:200px;text-align:center;top:209.62px;font-size:12px;color:#ffffff;font-weight:bold;">Produkt</div>
<div class="t" style="left:252.0px;width:200px;text-align:center;top:209.62px;font-size:12px;color:#ffffff;font-weight:bold;">Sprzedaż Oddział I</div>
<div class="t" style="left:377.5px;width:200px;text-align:center;top:209.62px;font-size:12px;color:#ffffff;font-weight:bold;">Sprzedaż Oddział II</div>
<div class="t" style="left:497.5px;width:200px;text-align:center;top:209.62px;font-size:12px;color:#ffffff;font-weight:bold;">Sprzedaż Oddział III</div>
<div class="t" style="left:32.3px;top:227.88px;font-size:12.7px;color:#1f1f1f;">Wschód</div>
<div class="t" style="left:166.6px;top:227.88px;font-size:12.7px;color:#1f1f1f;">Produkt 3</div>
<div class="t" style="left:108.30000000000001px;width:300px;text-align:right;top:227.88px;font-size:12.7px;color:#1f1f1f;">303,00</div>
<div class="t" style="left:234px;width:300px;text-align:right;top:227.88px;font-size:12.7px;color:#1f1f1f;">289,00</div>
<div class="t" style="left:346px;width:300px;text-align:right;top:227.88px;font-size:12.7px;color:#1f1f1f;">477,00</div>
<div class="t" style="left:32.3px;top:245.88px;font-size:12.7px;color:#1f1f1f;">Zachód</div>
<div class="t" style="left:166.6px;top:245.88px;font-size:12.7px;color:#1f1f1f;">Produkt 2</div>
<div class="t" style="left:108.30000000000001px;width:300px;text-align:right;top:245.88px;font-size:12.7px;color:#1f1f1f;">385,00</div>
<div class="t" style="left:234px;width:300px;text-align:right;top:245.88px;font-size:12.7px;color:#1f1f1f;">278,00</div>
<div class="t" style="left:346px;width:300px;text-align:right;top:245.88px;font-size:12.7px;color:#1f1f1f;">107,00</div>
<div class="t" style="left:32.3px;top:263.88px;font-size:12.7px;color:#1f1f1f;">Zachód</div>
<div class="t" style="left:166.6px;top:263.88px;font-size:12.7px;color:#1f1f1f;">Produkt 2</div>
<div class="t" style="left:108.30000000000001px;width:300px;text-align:right;top:263.88px;font-size:12.7px;color:#1f1f1f;">276,00</div>
<div class="t" style="left:234px;width:300px;text-align:right;top:263.88px;font-size:12.7px;color:#1f1f1f;">237,00</div>
<div class="t" style="left:346px;width:300px;text-align:right;top:263.88px;font-size:12.7px;color:#1f1f1f;">349,00</div>
<div class="t" style="left:32.3px;top:281.88px;font-size:12.7px;color:#1f1f1f;">Zachód</div>
<div class="t" style="left:166.6px;top:281.88px;font-size:12.7px;color:#1f1f1f;">Produkt 10</div>
<div class="t" style="left:108.30000000000001px;width:300px;text-align:right;top:281.88px;font-size:12.7px;color:#1f1f1f;">183,00</div>
<div class="t" style="left:234px;width:300px;text-align:right;top:281.88px;font-size:12.7px;color:#1f1f1f;">461,00</div>
<div class="t" style="left:346px;width:300px;text-align:right;top:281.88px;font-size:12.7px;color:#1f1f1f;">349,00</div>
<div class="t" style="left:32.3px;top:299.88px;font-size:12.7px;color:#1f1f1f;">Zachód</div>
<div class="t" style="left:166.6px;top:299.88px;font-size:12.7px;color:#1f1f1f;">Produkt 4</div>
<div class="t" style="left:108.30000000000001px;width:300px;text-align:right;top:299.88px;font-size:12.7px;color:#1f1f1f;">430,00</div>
<div class="t" style="left:234px;width:300px;text-align:right;top:299.88px;font-size:12.7px;color:#1f1f1f;">309,00</div>
<div class="t" style="left:346px;width:300px;text-align:right;top:299.88px;font-size:12.7px;color:#1f1f1f;">233,00</div>
<div class="t" style="left:32.3px;top:317.88px;font-size:12.7px;color:#1f1f1f;">Zachód</div>
<div class="t" style="left:166.6px;top:317.88px;font-size:12.7px;color:#1f1f1f;">Produkt 6</div>
<div class="t" style="left:108.30000000000001px;width:300px;text-align:right;top:317.88px;font-size:12.7px;color:#1f1f1f;">367,00</div>
<div class="t" style="left:234px;width:300px;text-align:right;top:317.88px;font-size:12.7px;color:#1f1f1f;">471,00</div>
<div class="t" style="left:346px;width:300px;text-align:right;top:317.88px;font-size:12.7px;color:#1f1f1f;">333,00</div>
<div class="t" style="left:32.3px;top:335.88px;font-size:12.7px;color:#1f1f1f;">Wschód</div>
<div class="t" style="left:166.6px;top:335.88px;font-size:12.7px;color:#1f1f1f;">Produkt 1</div>
<div class="t" style="left:108.30000000000001px;width:300px;text-align:right;top:335.88px;font-size:12.7px;color:#1f1f1f;">435,00</div>
<div class="t" style="left:234px;width:300px;text-align:right;top:335.88px;font-size:12.7px;color:#1f1f1f;">224,00</div>
<div class="t" style="left:346px;width:300px;text-align:right;top:335.88px;font-size:12.7px;color:#1f1f1f;">158,00</div>
<div class="t" style="left:32.3px;top:353.88px;font-size:12.7px;color:#1f1f1f;">Zachód</div>
<div class="t" style="left:166.6px;top:353.88px;font-size:12.7px;color:#1f1f1f;">Produkt 8</div>
<div class="t" style="left:108.30000000000001px;width:300px;text-align:right;top:353.88px;font-size:12.7px;color:#1f1f1f;">455,00</div>
<div class="t" style="left:234px;width:300px;text-align:right;top:353.88px;font-size:12.7px;color:#1f1f1f;">106,00</div>
<div class="t" style="left:346px;width:300px;text-align:right;top:353.88px;font-size:12.7px;color:#1f1f1f;">215,00</div>
<div class="t" style="left:32.3px;top:371.88px;font-size:12.7px;color:#1f1f1f;">Wschód</div>
<div class="t" style="left:166.6px;top:371.88px;font-size:12.7px;color:#1f1f1f;">Produkt 7</div>
<div class="t" style="left:108.30000000000001px;width:300px;text-align:right;top:371.88px;font-size:12.7px;color:#1f1f1f;">494,00</div>
<div class="t" style="left:234px;width:300px;text-align:right;top:371.88px;font-size:12.7px;color:#1f1f1f;">354,00</div>
<div class="t" style="left:346px;width:300px;text-align:right;top:371.88px;font-size:12.7px;color:#1f1f1f;">248,00</div>
<div class="t" style="left:32.3px;top:389.88px;font-size:12.7px;color:#1f1f1f;">Wschód</div>
<div class="t" style="left:166.6px;top:389.88px;font-size:12.7px;color:#1f1f1f;">Produkt 7</div>
<div class="t" style="left:108.30000000000001px;width:300px;text-align:right;top:389.88px;font-size:12.7px;color:#1f1f1f;">132,00</div>
<div class="t" style="left:234px;width:300px;text-align:right;top:389.88px;font-size:12.7px;color:#1f1f1f;">115,00</div>
<div class="t" style="left:346px;width:300px;text-align:right;top:389.88px;font-size:12.7px;color:#1f1f1f;">196,00</div>
<div class="t" style="left:32.3px;top:407.88px;font-size:12.7px;color:#1f1f1f;">Zachód</div>
<div class="t" style="left:166.6px;top:407.88px;font-size:12.7px;color:#1f1f1f;">Produkt 6</div>
<div class="t" style="left:108.30000000000001px;width:300px;text-align:right;top:407.88px;font-size:12.7px;color:#1f1f1f;">112,00</div>
<div class="t" style="left:234px;width:300px;text-align:right;top:407.88px;font-size:12.7px;color:#1f1f1f;">214,00</div>
<div class="t" style="left:346px;width:300px;text-align:right;top:407.88px;font-size:12.7px;color:#1f1f1f;">100,00</div>
<div class="t" style="left:32.3px;top:425.88px;font-size:12.7px;color:#1f1f1f;">Wschód</div>
<div class="t" style="left:166.6px;top:425.88px;font-size:12.7px;color:#1f1f1f;">Produkt 3</div>
<div class="t" style="left:108.30000000000001px;width:300px;text-align:right;top:425.88px;font-size:12.7px;color:#1f1f1f;">310,00</div>
<div class="t" style="left:234px;width:300px;text-align:right;top:425.88px;font-size:12.7px;color:#1f1f1f;">360,00</div>
<div class="t" style="left:346px;width:300px;text-align:right;top:425.88px;font-size:12.7px;color:#1f1f1f;">301,00</div>
<div class="t" style="left:32.3px;top:443.88px;font-size:12.7px;color:#1f1f1f;">Wschód</div>
<div class="t" style="left:166.6px;top:443.88px;font-size:12.7px;color:#1f1f1f;">Produkt 5</div>
<div class="t" style="left:108.30000000000001px;width:300px;text-align:right;top:443.88px;font-size:12.7px;color:#1f1f1f;">411,00</div>
<div class="t" style="left:234px;width:300px;text-align:right;top:443.88px;font-size:12.7px;color:#1f1f1f;">342,00</div>
<div class="t" style="left:346px;width:300px;text-align:right;top:443.88px;font-size:12.7px;color:#1f1f1f;">236,00</div>
<div class="t" style="left:32.3px;top:461.88px;font-size:12.7px;color:#1f1f1f;">Wschód</div>
<div class="t" style="left:166.6px;top:461.88px;font-size:12.7px;color:#1f1f1f;">Produkt 9</div>
<div class="t" style="left:108.30000000000001px;width:300px;text-align:right;top:461.88px;font-size:12.7px;color:#1f1f1f;">305,00</div>
<div class="t" style="left:234px;width:300px;text-align:right;top:461.88px;font-size:12.7px;color:#1f1f1f;">316,00</div>
<div class="t" style="left:346px;width:300px;text-align:right;top:461.88px;font-size:12.7px;color:#1f1f1f;">411,00</div>
<div class="t" style="left:32.3px;top:479.88px;font-size:12.7px;color:#1f1f1f;">Wschód</div>
<div class="t" style="left:166.6px;top:479.88px;font-size:12.7px;color:#1f1f1f;">Produkt 1</div>
<div class="t" style="left:108.30000000000001px;width:300px;text-align:right;top:479.88px;font-size:12.7px;color:#1f1f1f;">350,00</div>
<div class="t" style="left:234px;width:300px;text-align:right;top:479.88px;font-size:12.7px;color:#1f1f1f;">294,00</div>
<div class="t" style="left:346px;width:300px;text-align:right;top:479.88px;font-size:12.7px;color:#1f1f1f;">495,00</div>
<div class="t" style="left:32.3px;top:497.88px;font-size:12.7px;color:#1f1f1f;">Zachód</div>
<div class="t" style="left:166.6px;top:497.88px;font-size:12.7px;color:#1f1f1f;">Produkt 8</div>
<div class="t" style="left:108.30000000000001px;width:300px;text-align:right;top:497.88px;font-size:12.7px;color:#1f1f1f;">394,00</div>
<div class="t" style="left:234px;width:300px;text-align:right;top:497.88px;font-size:12.7px;color:#1f1f1f;">466,00</div>
<div class="t" style="left:346px;width:300px;text-align:right;top:497.88px;font-size:12.7px;color:#1f1f1f;">208,00</div>
<div class="t" style="left:32.3px;top:515.88px;font-size:12.7px;color:#1f1f1f;">Wschód</div>
<div class="t" style="left:166.6px;top:515.88px;font-size:12.7px;color:#1f1f1f;">Produkt 9</div>
<div class="t" style="left:108.30000000000001px;width:300px;text-align:right;top:515.88px;font-size:12.7px;color:#1f1f1f;">470,00</div>
<div class="t" style="left:234px;width:300px;text-align:right;top:515.88px;font-size:12.7px;color:#1f1f1f;">442,00</div>
<div class="t" style="left:346px;width:300px;text-align:right;top:515.88px;font-size:12.7px;color:#1f1f1f;">367,00</div>
<div class="t" style="left:32.3px;top:533.88px;font-size:12.7px;color:#1f1f1f;">Zachód</div>
<div class="t" style="left:166.6px;top:533.88px;font-size:12.7px;color:#1f1f1f;">Produkt 10</div>
<div class="t" style="left:108.30000000000001px;width:300px;text-align:right;top:533.88px;font-size:12.7px;color:#1f1f1f;">277,00</div>
<div class="t" style="left:234px;width:300px;text-align:right;top:533.88px;font-size:12.7px;color:#1f1f1f;">228,00</div>
<div class="t" style="left:346px;width:300px;text-align:right;top:533.88px;font-size:12.7px;color:#1f1f1f;">160,00</div>
<div class="t" style="left:32.3px;top:551.88px;font-size:12.7px;color:#1f1f1f;">Wschód</div>
<div class="t" style="left:166.6px;top:551.88px;font-size:12.7px;color:#1f1f1f;">Produkt 5</div>
<div class="t" style="left:108.30000000000001px;width:300px;text-align:right;top:551.88px;font-size:12.7px;color:#1f1f1f;">168,00</div>
<div class="t" style="left:234px;width:300px;text-align:right;top:551.88px;font-size:12.7px;color:#1f1f1f;">479,00</div>
<div class="t" style="left:346px;width:300px;text-align:right;top:551.88px;font-size:12.7px;color:#1f1f1f;">308,00</div>
<div class="t" style="left:32.3px;top:569.88px;font-size:12.7px;color:#1f1f1f;">Zachód</div>
<div class="t" style="left:166.6px;top:569.88px;font-size:12.7px;color:#1f1f1f;">Produkt 4</div>
<div class="t" style="left:108.30000000000001px;width:300px;text-align:right;top:569.88px;font-size:12.7px;color:#1f1f1f;">382,00</div>
<div class="t" style="left:234px;width:300px;text-align:right;top:569.88px;font-size:12.7px;color:#1f1f1f;">373,00</div>
<div class="t" style="left:346px;width:300px;text-align:right;top:569.88px;font-size:12.7px;color:#1f1f1f;">319,00</div>
<div style="position:absolute;left:30px;top:242px;width:625px;height:1px;background:#555555"></div>
<div style="position:absolute;left:30px;top:260px;width:625px;height:1px;background:#555555"></div>
<div style="position:absolute;left:30px;top:278px;width:625px;height:1px;background:#555555"></div>
<div style="position:absolute;left:30px;top:296px;width:625px;height:1px;background:#555555"></div>
<div style="position:absolute;left:30px;top:314px;width:625px;height:1px;background:#555555"></div>
<div style="position:absolute;left:30px;top:332px;width:625px;height:1px;background:#555555"></div>
<div style="position:absolute;left:30px;top:350px;width:625px;height:1px;background:#555555"></div>
<div style="position:absolute;left:30px;top:368px;width:625px;height:1px;background:#555555"></div>
<div style="position:absolute;left:30px;top:386px;width:625px;height:1px;background:#555555"></div>
<div style="position:absolute;left:30px;top:404px;width:625px;height:1px;background:#555555"></div>
<div style="position:absolute;left:30px;top:422px;width:625px;height:1px;background:#555555"></div>
<div style="position:absolute;left:30px;top:440px;width:625px;height:1px;background:#555555"></div>
<div style="position:absolute;left:30px;top:458px;width:625px;height:1px;background:#555555"></div>
<div style="position:absolute;left:30px;top:476px;width:625px;height:1px;background:#555555"></div>
<div style="position:absolute;left:30px;top:494px;width:625px;height:1px;background:#555555"></div>
<div style="position:absolute;left:30px;top:512px;width:625px;height:1px;background:#555555"></div>
<div style="position:absolute;left:30px;top:530px;width:625px;height:1px;background:#555555"></div>
<div style="position:absolute;left:30px;top:548px;width:625px;height:1px;background:#555555"></div>
<div style="position:absolute;left:30px;top:566px;width:625px;height:1px;background:#555555"></div>
<div style="position:absolute;left:30px;top:584px;width:625px;height:1px;background:#555555"></div>
<div style="position:absolute;left:163px;top:205px;width:1px;height:18px;background:#1c1a6e"></div>
<div style="position:absolute;left:163px;top:224px;width:1px;height:361px;background:#3c3c3c"></div>
<div style="position:absolute;left:289px;top:205px;width:1px;height:18px;background:#1c1a6e"></div>
<div style="position:absolute;left:289px;top:224px;width:1px;height:361px;background:#3c3c3c"></div>
<div style="position:absolute;left:414px;top:205px;width:1px;height:18px;background:#1c1a6e"></div>
<div style="position:absolute;left:414px;top:224px;width:1px;height:361px;background:#3c3c3c"></div>
<div style="position:absolute;left:540px;top:205px;width:1px;height:18px;background:#1c1a6e"></div>
<div style="position:absolute;left:540px;top:224px;width:1px;height:361px;background:#3c3c3c"></div>
<div style="position:absolute;left:654px;top:205px;width:1px;height:18px;background:#1c1a6e"></div>
<div style="position:absolute;left:654px;top:224px;width:1px;height:361px;background:#3c3c3c"></div>
<div style="position:absolute;left:29px;top:157px;width:1px;height:437px;background:#d6d6d6"></div>
<div style="position:absolute;left:1267px;top:140px;width:13px;height:454px;background:#f7f7f7"></div>
<svg style="position:absolute;left:1272px;top:142px;" width="8" height="7" viewBox="0 0 8 7"><path d="M0.5 6.5L4.5 1 8.5 6.5z" fill="#6e6e6e"/></svg>
<div style="position:absolute;left:1273px;top:153px;width:9px;height:404px;background:#7a7a7a;border-radius:4px"></div>
<svg style="position:absolute;left:1272px;top:586px;" width="8" height="7" viewBox="0 0 8 7"><path d="M0.5 0.5L4.5 6 8.5 0.5z" fill="#6e6e6e"/></svg>
</body></html>
